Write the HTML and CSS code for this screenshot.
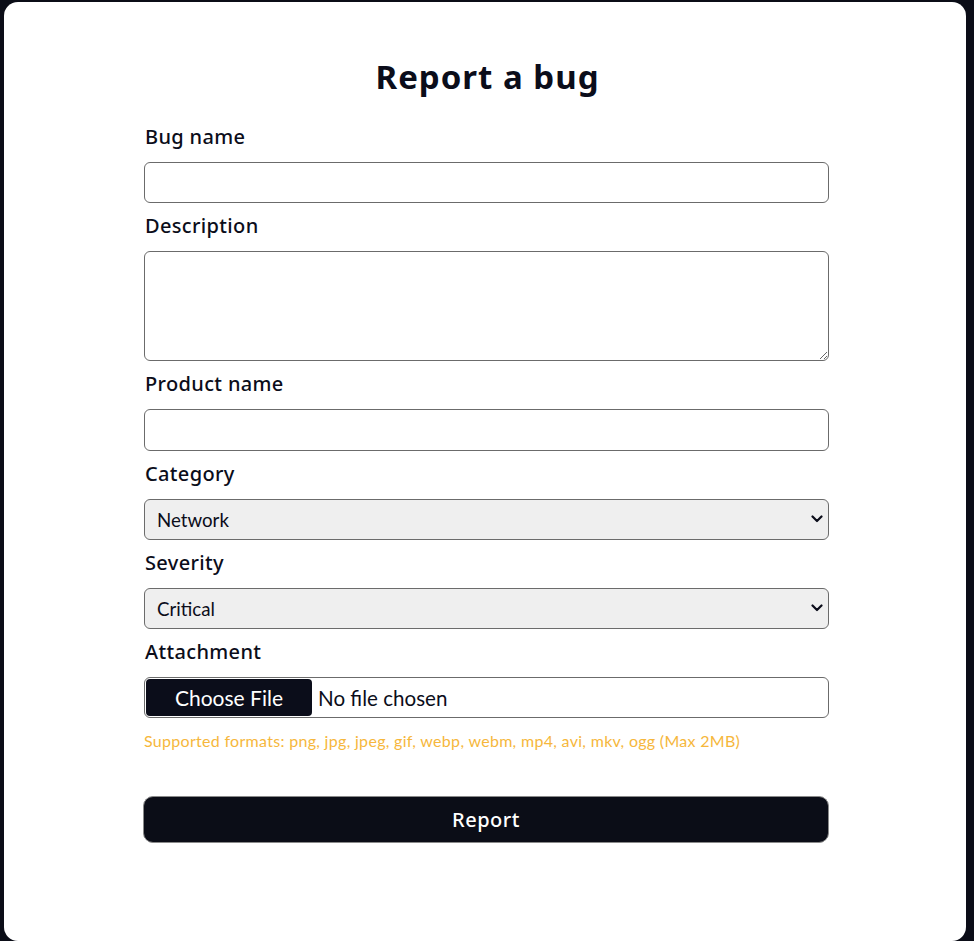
FILE: index.html
```html
<!DOCTYPE html>
<html lang="en">
<head>
<meta charset="utf-8">
<title>Report a bug</title>
<link rel="stylesheet" href="styles.css">
</head>
<body>
<main class="card">
  <form class="bug-form">
    <h1 class="title">Report a bug</h1>
    <label class="label" for="bug-name">Bug name</label>
    <input class="field" id="bug-name" type="text">
    <label class="label" for="desc">Description</label>
    <textarea class="field area" id="desc"></textarea>
    <label class="label" for="product">Product name</label>
    <input class="field tall" id="product" type="text">
    <label class="label" for="category">Category</label>
    <div class="select-wrap">
      <select class="field select" id="category">
        <option>Network</option>
        <option>UI</option>
        <option>Performance</option>
      </select>
      <svg class="chevron" width="12" height="8" viewBox="0 0 12 8" aria-hidden="true"><path d="M1.5 1.5 L6 6 L10.5 1.5" fill="none" stroke="#0b0d1a" stroke-width="2.2" stroke-linecap="round" stroke-linejoin="round"/></svg>
    </div>
    <label class="label" for="severity">Severity</label>
    <div class="select-wrap">
      <select class="field select" id="severity">
        <option>Critical</option>
        <option>Major</option>
        <option>Minor</option>
      </select>
      <svg class="chevron" width="12" height="8" viewBox="0 0 12 8" aria-hidden="true"><path d="M1.5 1.5 L6 6 L10.5 1.5" fill="none" stroke="#0b0d1a" stroke-width="2.2" stroke-linecap="round" stroke-linejoin="round"/></svg>
    </div>
    <label class="label" for="attach">Attachment</label>
    <input class="field file" id="attach" type="file">
    <p class="hint">Supported formats: png, jpg, jpeg, gif, webp, webm, mp4, avi, mkv, ogg (Max 2MB)</p>
    <button class="submit" type="button">Report</button>
  </form>
</main>
</body>
</html>
```
FILE: styles.css
```css
html, body {
  margin: 0;
  padding: 0;
  background: #0b0d17;
}
body {
  font-family: "Noto Sans", "Open Sans", sans-serif;
  color: #0b0d1a;
}
.card {
  margin: 2px 8px 0 4px;
  height: 939px;
  background: #ffffff;
  border-radius: 14px;
  box-sizing: border-box;
  padding-top: 55px;
}
.bug-form {
  width: 685px;
  margin-left: 140px;
  display: flex;
  flex-direction: column;
}
.title {
  margin: 0 0 28px;
  font-size: 33px;
  line-height: 40px;
  font-weight: 700;
  letter-spacing: 1px;
  text-align: center;
  padding-left: 2px;
}
.label {
  display: block;
  font-size: 20px;
  line-height: 24px;
  font-weight: 500;
  letter-spacing: 0.35px;
  margin: 0 0 13px 1px;
}
.field {
  box-sizing: border-box;
  width: 685px;
  height: 41px;
  border: 1px solid #6b6b6b;
  border-radius: 6px;
  margin: 0 0 11px;
  background: #ffffff;
  font-family: "Lato", sans-serif;
  font-size: 18.7px;
  color: #0b0d1a;
}
.tall {
  height: 42px;
}
.area {
  height: 110px;
  resize: vertical;
}
.select-wrap {
  position: relative;
}
.select {
  display: block;
  appearance: none;
  -webkit-appearance: none;
  background-color: #efefef;
  padding: 0 12px;
}
.chevron {
  position: absolute;
  right: 6px;
  top: 16px;
  pointer-events: none;
}
.file {
  padding: 1px;
  font-size: 20.6px;
  font-family: "Lato", sans-serif;
  line-height: 1;
}
.file::file-selector-button {
  height: 37px;
  width: 166px;
  margin-right: 6px;
  border: none;
  border-radius: 4px;
  background: #0b0d1a;
  color: #ffffff;
  font-family: "Lato", sans-serif;
  font-size: 21px;
}
.hint {
  margin: 2px 0 0;
  font-family: "Lato", sans-serif;
  font-size: 16px;
  line-height: 20px;
  letter-spacing: 0.3px;
  color: #f6b73c;
}
.submit {
  margin-top: 45px;
  width: 686px;
  margin-left: -1px;
  height: 47px;
  border: 1px solid #8a8a8a;
  border-radius: 10px;
  background: #0b0d17;
  color: #ffffff;
  font-family: "Noto Sans", sans-serif;
  font-size: 20px;
  letter-spacing: 0.5px;
  font-weight: 500;
}
```
